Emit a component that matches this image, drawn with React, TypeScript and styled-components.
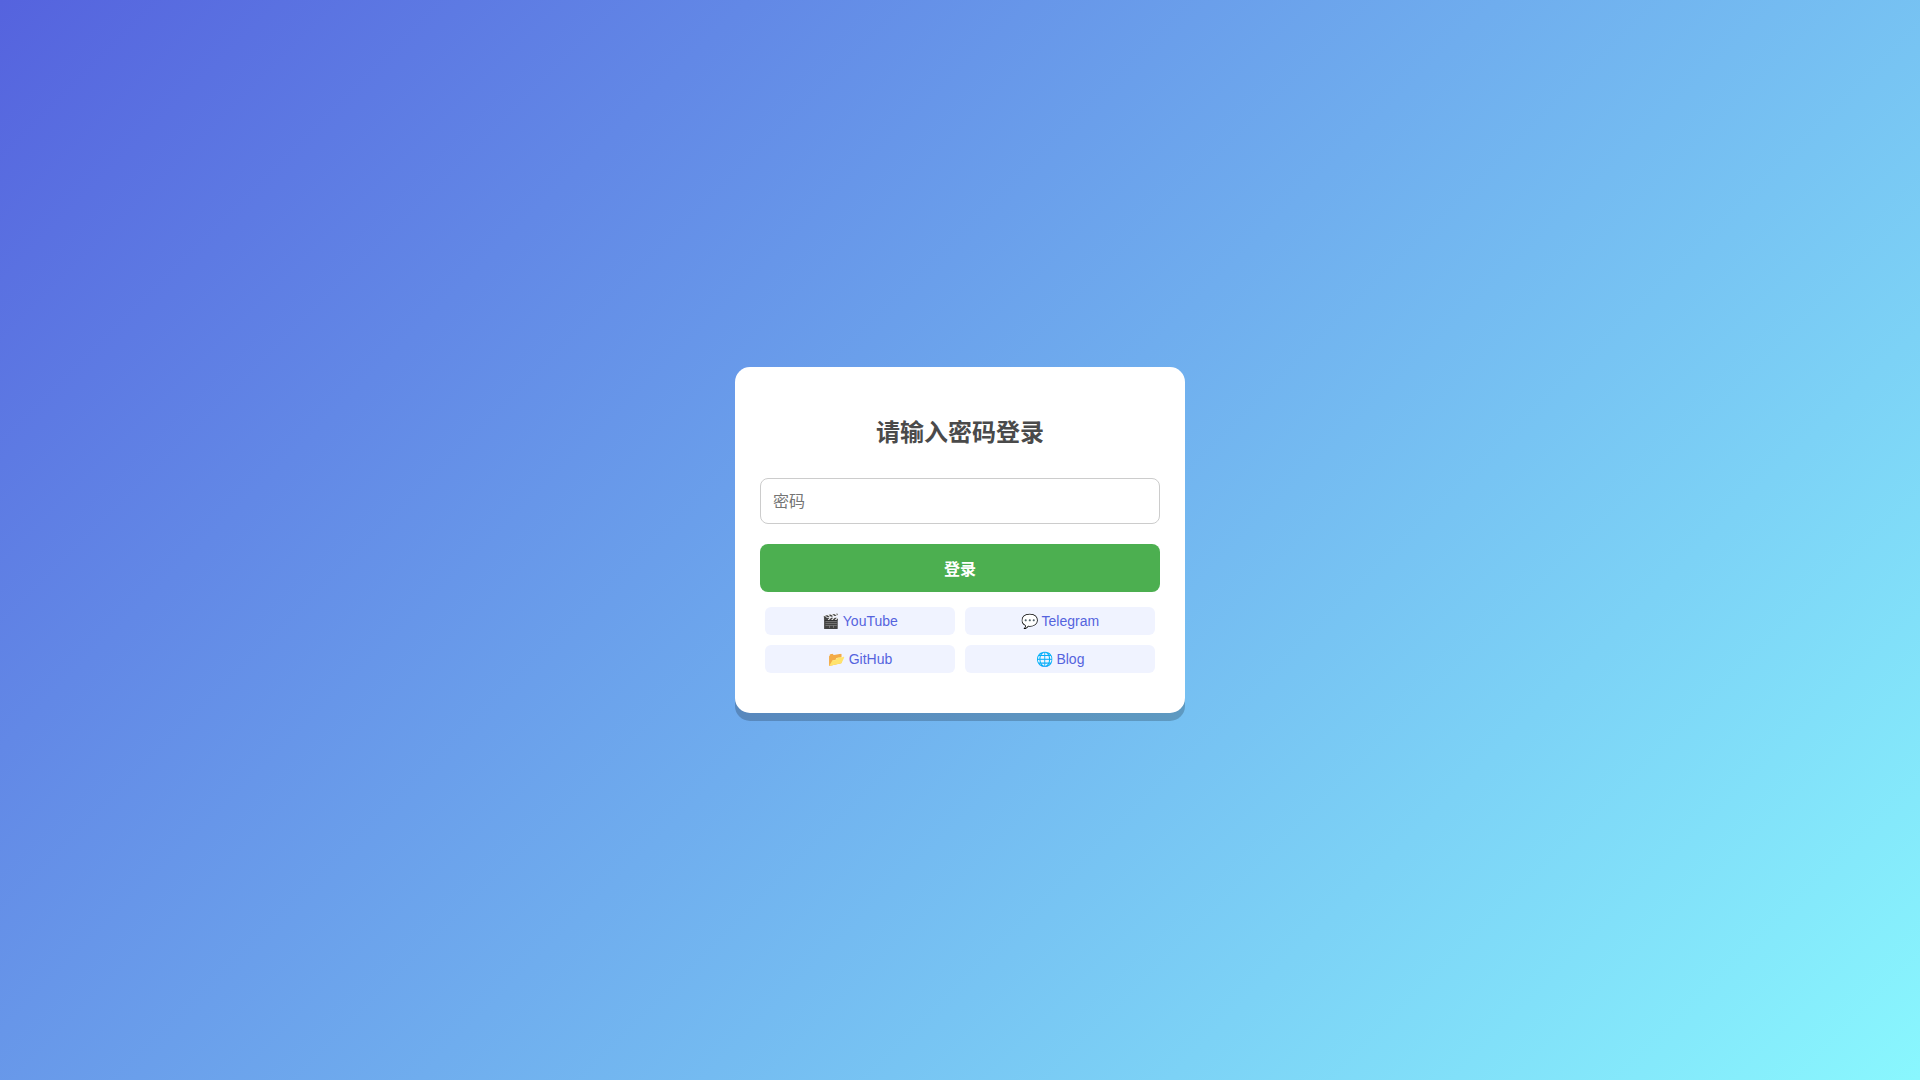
import React, { useState } from "react";
import styled, { createGlobalStyle } from "styled-components";

const GlobalStyle = createGlobalStyle`
  * {
    box-sizing: border-box;
  }

  body {
    margin: 0;
    font-family: "Liberation Sans", "Noto Sans CJK SC", sans-serif;
  }
`;

const Page = styled.main`
  display: flex;
  align-items: center;
  justify-content: center;
  min-height: 100vh;
  background: linear-gradient(135deg, #5563de, #89f7fe);
`;

const Card = styled.form`
  width: 100%;
  max-width: 450px;
  padding: 45px 25px 40px;
  border-radius: 15px;
  background: #fff;
  box-shadow: 0 8px 0 rgba(0, 0, 0, 0.2);
  text-align: center;
`;

const Title = styled.h1`
  margin: 0 0 24px;
  color: #4a4a4a;
  font-size: 24px;
  font-weight: bold;
  line-height: 42px;
`;

const PasswordInput = styled.input`
  display: block;
  width: 100%;
  height: 46px;
  margin: 0 0 20px;
  padding: 12px 12px 10px;
  border: 1px solid #ccc;
  border-radius: 8px;
  background: #fff;
  color: #333;
  font-family: inherit;
  font-size: 16px;

  &::placeholder {
    color: #757575;
  }
`;

const SubmitButton = styled.button`
  display: block;
  width: 100%;
  height: 48px;
  padding: 0 12px;
  border: 0;
  border-radius: 8px;
  background: #4caf50;
  color: #fff;
  font-family: inherit;
  font-size: 16px;
  font-weight: bold;
  cursor: pointer;
`;

const Links = styled.nav`
  display: grid;
  grid-template-columns: 1fr 1fr;
  gap: 10px;
  margin-top: 15px;
  padding: 0 5px;
`;

const LinkItem = styled.a`
  padding: 6px;
  border-radius: 6px;
  background: #f0f3ff;
  color: #5563de;
  font-size: 14px;
  line-height: 16px;
  text-decoration: none;
`;

const links = [
  { label: "🎬 YouTube", href: "#youtube" },
  { label: "💬 Telegram", href: "#telegram" },
  { label: "📂 GitHub", href: "#github" },
  { label: "🌐 Blog", href: "#blog" },
];

export default function App() {
  const [password, setPassword] = useState("");

  return (
    <>
      <GlobalStyle />
      <Page lang="zh-CN">
        <Card onSubmit={(event) => event.preventDefault()}>
          <Title>请输入密码登录</Title>
          <PasswordInput
            type="password"
            name="password"
            aria-label="密码"
            placeholder="密码"
            value={password}
            onChange={(event) => setPassword(event.target.value)}
          />
          <SubmitButton type="submit">登录</SubmitButton>
          <Links>
            {links.map((link) => (
              <LinkItem key={link.label} href={link.href}>
                {link.label}
              </LinkItem>
            ))}
          </Links>
        </Card>
      </Page>
    </>
  );
}
